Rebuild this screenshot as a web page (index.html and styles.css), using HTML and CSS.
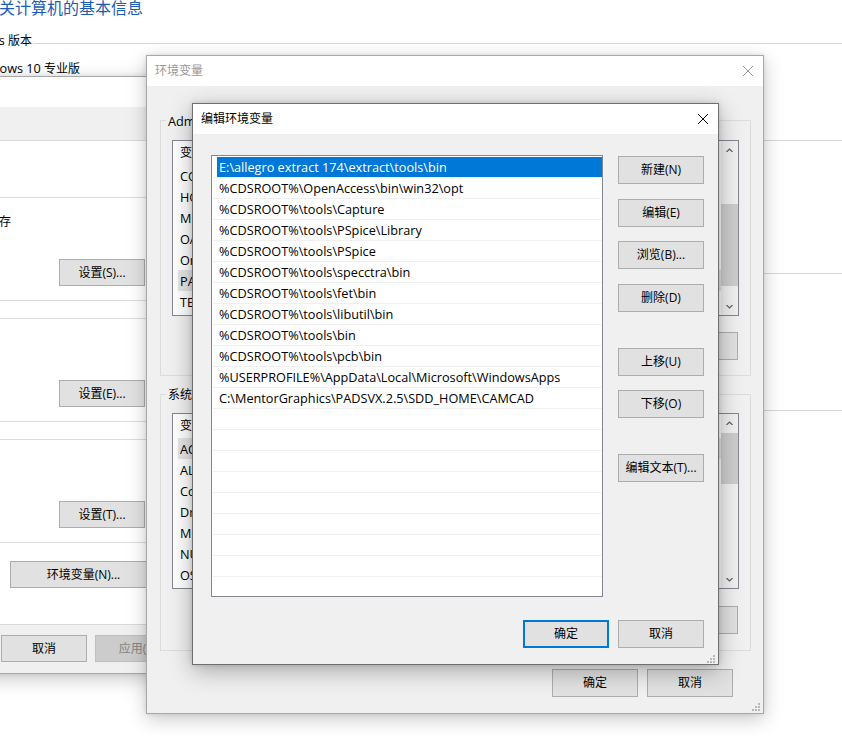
FILE: index.html
```html
<!DOCTYPE html>
<html lang="zh-CN">
<head>
<meta charset="utf-8">
<title>编辑环境变量</title>
<link rel="stylesheet" href="styles.css">
</head>
<body>
<main class="desktop">

  <section class="cp">
    <div class="cp-title-box"><h1 class="cp-title">查看有关计算机的基本信息</h1></div>
    <div class="cp-section">
      <div class="cp-section-box"><h2 class="cp-section-label"><span class="lat">Windows</span> 版本</h2></div>
      <span class="cp-rule"></span>
    </div>
    <div class="cp-edition-box"><p class="cp-edition"><span class="lat">Windows 10</span> 专业版</p></div>
    <div class="cp-sep cp-sep-1"></div>
    <div class="cp-sep cp-sep-2"></div>
    <div class="cp-sep cp-sep-3"></div>
  </section>

  <section class="win sysprops">
    <header class="titlebar"></header>
    <div class="tabstrip"></div>
    <div class="tabpage">
      <div class="sp-group sp-group-1">
        <p class="sp-desc">视觉效果，处理器计划，内存使用，以及虚拟内存</p>
        <button class="btn btn-27 sp-btn">设置(S)...</button>
      </div>
      <div class="sp-group">
        <button class="btn btn-27 sp-btn sp-btn-top">设置(E)...</button>
      </div>
      <div class="sp-group">
        <button class="btn btn-27 sp-btn sp-btn-top">设置(T)...</button>
      </div>
      <button class="btn btn-27 sp-env">环境变量(N)...</button>
    </div>
    <footer class="sp-footer">
      <button class="btn btn-27">取消</button>
      <button class="btn btn-27 btn-disabled">应用(A)</button>
    </footer>
  </section>

  <section class="win envdlg">
    <header class="titlebar">
      <span class="title title-inactive">环境变量</span>
      <svg class="close close-inactive" viewBox="0 0 10 10"><path d="M0 0L10 10M10 0L0 10" stroke="currentColor" stroke-width="1" fill="none"/></svg>
    </header>
    <div class="ev-group ev-group-user">
      <span class="legend"><span class="lat">Administrator</span> 的用户变量(U)</span>
      <div class="lv">
        <div class="lv-body">
          <div class="lv-head">变量</div>
          <div class="lv-row">CONCEPT_INST_DIR</div>
          <div class="lv-row">HOME</div>
          <div class="lv-row">MOZ_PLUGIN_PATH</div>
          <div class="lv-row">OA_HOME</div>
          <div class="lv-row">OneDrive</div>
          <div class="lv-row is-current">PATH</div>
          <div class="lv-row">TEMP</div>
        </div>
        <div class="vscroll vscroll-user">
          <span class="vs-arrow"><svg viewBox="0 0 7 4"><path d="M0.5 4L3.5 1L6.5 4" stroke="currentColor" stroke-width="1.2" fill="none"/></svg></span>
          <span class="vs-thumb"></span>
          <span class="vs-arrow vs-down"><svg viewBox="0 0 7 4"><path d="M0.5 0L3.5 3L6.5 0" stroke="currentColor" stroke-width="1.2" fill="none"/></svg></span>
        </div>
      </div>
      <div class="ev-actions">
        <button class="btn">新建(N)...</button>
        <button class="btn">编辑(E)...</button>
        <button class="btn">删除(D)</button>
      </div>
    </div>
    <div class="ev-group ev-group-sys">
      <span class="legend">系统变量(S)</span>
      <div class="lv">
        <div class="lv-body">
          <div class="lv-head">变量</div>
          <div class="lv-row is-current">ACSvcPort</div>
          <div class="lv-row">ALLUSERSPROFILE</div>
          <div class="lv-row">ComSpec</div>
          <div class="lv-row">DriverData</div>
          <div class="lv-row">MGC_HOME</div>
          <div class="lv-row">NUMBER_OF_PROCESSORS</div>
          <div class="lv-row">OS</div>
        </div>
        <div class="vscroll vscroll-sys">
          <span class="vs-arrow"><svg viewBox="0 0 7 4"><path d="M0.5 4L3.5 1L6.5 4" stroke="currentColor" stroke-width="1.2" fill="none"/></svg></span>
          <span class="vs-thumb"></span>
          <span class="vs-arrow vs-down"><svg viewBox="0 0 7 4"><path d="M0.5 0L3.5 3L6.5 0" stroke="currentColor" stroke-width="1.2" fill="none"/></svg></span>
        </div>
      </div>
      <div class="ev-actions">
        <button class="btn">新建(W)...</button>
        <button class="btn">编辑(I)...</button>
        <button class="btn">删除(L)</button>
      </div>
    </div>
    <footer class="ev-footer">
      <button class="btn">确定</button>
      <button class="btn">取消</button>
    </footer>
    <svg class="grip" viewBox="0 0 8 8"><path d="M6 0h2v2h-2zM3 3h2v2h-2zM6 3h2v2h-2zM0 6h2v2h-2zM3 6h2v2h-2zM6 6h2v2h-2z" fill="#b9b9b9"/></svg>
  </section>

  <section class="win editdlg">
    <header class="titlebar">
      <span class="title">编辑环境变量</span>
      <svg class="close" viewBox="0 0 10 10"><path d="M0 0L10 10M10 0L0 10" stroke="currentColor" stroke-width="1" fill="none"/></svg>
    </header>
    <div class="ed-body">
      <div class="pl">
        <div class="pl-row is-selected">E:\allegro extract 174\extract\tools\bin</div>
        <div class="pl-row">%CDSROOT%\OpenAccess\bin\win32\opt</div>
        <div class="pl-row">%CDSROOT%\tools\Capture</div>
        <div class="pl-row">%CDSROOT%\tools\PSpice\Library</div>
        <div class="pl-row">%CDSROOT%\tools\PSpice</div>
        <div class="pl-row">%CDSROOT%\tools\specctra\bin</div>
        <div class="pl-row">%CDSROOT%\tools\fet\bin</div>
        <div class="pl-row">%CDSROOT%\tools\libutil\bin</div>
        <div class="pl-row">%CDSROOT%\tools\bin</div>
        <div class="pl-row">%CDSROOT%\tools\pcb\bin</div>
        <div class="pl-row">%USERPROFILE%\AppData\Local\Microsoft\WindowsApps</div>
        <div class="pl-row">C:\MentorGraphics\PADSVX.2.5\SDD_HOME\CAMCAD</div>
        <div class="pl-row"></div>
        <div class="pl-row"></div>
        <div class="pl-row"></div>
        <div class="pl-row"></div>
        <div class="pl-row"></div>
        <div class="pl-row"></div>
        <div class="pl-row"></div>
        <div class="pl-row"></div>
        <div class="pl-row"></div>
      </div>
      <div class="ed-actions">
        <button class="btn">新建(N)</button>
        <button class="btn gap-15">编辑(E)</button>
        <button class="btn gap-14">浏览(B)...</button>
        <button class="btn gap-15">删除(D)</button>
        <button class="btn gap-36">上移(U)</button>
        <button class="btn gap-14">下移(O)</button>
        <button class="btn gap-36">编辑文本(T)...</button>
      </div>
    </div>
    <footer class="ed-footer">
      <button class="btn btn-default">确定</button>
      <button class="btn">取消</button>
    </footer>
    <svg class="grip" viewBox="0 0 8 8"><path d="M6 0h2v2h-2zM3 3h2v2h-2zM6 3h2v2h-2zM0 6h2v2h-2zM3 6h2v2h-2zM6 6h2v2h-2z" fill="#b9b9b9"/></svg>
  </section>

</main>
</body>
</html>
```

FILE: styles.css
```css
* { box-sizing: border-box; margin: 0; padding: 0; }
html, body { width: 842px; height: 736px; overflow: hidden; background: #fff; }
body {
  font-family: "Open Sans", "Noto Sans CJK SC", sans-serif;
  font-size: 12px;
  line-height: 16px;
  color: #000;
}
.desktop { position: relative; display: block; width: 842px; height: 736px; overflow: hidden; }
.lat { font-size: 12.7px; }

/* ---------- control panel (background) ---------- */
.cp { position: absolute; left: 0; top: 0; width: 842px; display: flex; flex-direction: column; }
.cp-title-box { display: flex; justify-content: flex-end; width: 143px; height: 16px; }
.cp-title { flex: none; font-size: 16px; line-height: 16px; font-weight: 400; color: #1c5cb4; white-space: nowrap; }
.cp-section { display: flex; height: 16px; margin-top: 16px; }
.cp-section-box { flex: none; display: flex; justify-content: flex-end; width: 32px; }
.cp-section-label { flex: none; font-size: 12px; font-weight: 400; white-space: nowrap; }
.cp-rule { flex: 1; height: 1px; align-self: flex-end; margin: 0 0 4px 1px; background: #d6d6d6; }
.cp-edition-box { display: flex; justify-content: flex-end; width: 80px; height: 16px; margin-top: 12px; }
.cp-edition { flex: none; white-space: nowrap; }
.cp-sep { height: 1px; background: #d6d6d6; }
.cp-sep-1 { margin-top: 64px; }
.cp-sep-2 { margin-top: 132px; }
.cp-sep-3 { margin-top: 136px; }

/* ---------- generic window ---------- */
.win {
  position: absolute;
  display: flex;
  flex-direction: column;
  background: #f0f0f0;
  border: 1px solid #a8a8a8;
  box-shadow: 0 5px 18px rgba(0, 0, 0, .22), 0 0 4px rgba(0, 0, 0, .10);
}
.titlebar { flex: none; height: 30px; display: flex; align-items: center; padding-left: 8px; background: #fff; }
.title { flex: 1; white-space: nowrap; }
.title-inactive { color: #999; }
.close { flex: none; width: 10px; height: 10px; margin-right: 10px; color: #000; }
.close-inactive { color: #999; }
.grip { position: absolute; width: 8px; height: 8px; right: 3px; bottom: 1px; }

.btn {
  flex: none;
  display: flex;
  align-items: center;
  justify-content: center;
  width: 86px;
  height: 28px;
  padding: 0;
  background: #e1e1e1;
  border: 1px solid #adadad;
  font: inherit;
  color: #000;
  white-space: nowrap;
}
.btn-27 { height: 27px; }
.btn-default { border: 2px solid #0078d7; }
.btn-disabled { background: #cccccc; border-color: #bfbfbf; color: #838383; }

/* ---------- system properties (left) ---------- */
.sysprops { left: -270px; top: 76px; width: 462px; height: 598px; }
.tabstrip { flex: none; height: 33px; }
.tabpage {
  flex: none;
  display: flex;
  flex-direction: column;
  height: 485px;
  margin: 0 8px;
  background: #fff;
  border: 1px solid #d9d9d9;
}
.sp-group {
  flex: none;
  display: flex;
  flex-direction: column;
  height: 104px;
  margin: 17px 24px 0 6px;
  padding-right: 12px;
  border: 1px solid #dcdcdc;
}
.sp-group-1 { margin-top: 56px; padding-top: 16px; }
.sp-desc { white-space: nowrap; }
.sp-btn { align-self: flex-end; margin-top: 29px; }
.sp-btn-top { margin-top: 61px; }
.sp-env { align-self: flex-end; width: 147px; margin: 18px 25px 0 0; }
.sp-footer { flex: 1; display: flex; justify-content: flex-end; gap: 8px; padding: 10px 10px 0 0; }

/* ---------- environment variables (middle) ---------- */
.envdlg { left: 146px; top: 55px; width: 618px; height: 659px; }
.ev-group {
  flex: none;
  display: flex;
  flex-direction: column;
  margin: 18px 12px 0 13px;
  border: 1px solid #dcdcdc;
}
.ev-group-user { margin-top: 34px; height: 256px; }
.ev-group-sys { height: 257px; }
.legend { align-self: flex-start; margin: -8px 0 0 5px; padding: 0 2px; background: #f0f0f0; white-space: nowrap; }
.lv {
  flex: none;
  display: flex;
  height: 176px;
  margin: 10px 11px 0;
  background: #fff;
  border: 1px solid #828790;
}
.lv-body { flex: 1; min-width: 0; overflow: hidden; }
.lv-head { height: 24px; display: flex; align-items: center; padding-left: 7px; }
.lv-row { height: 21px; display: flex; align-items: center; margin-left: 5px; padding-left: 2px; font-size: 12.7px; white-space: nowrap; }
.lv-row.is-current { background: #e5e5e5; }
.vscroll { flex: none; width: 17px; display: flex; flex-direction: column; background: #f0f0f0; }
.vs-arrow { flex: none; height: 17px; display: flex; align-items: center; justify-content: center; color: #606060; }
.vs-arrow svg { width: 7px; height: 4px; }
.vs-down { margin-top: auto; }
.vs-thumb { flex: none; background: #cdcdcd; }
.vscroll-user .vs-thumb { height: 82px; margin-top: 46px; }
.vscroll-sys .vs-thumb { height: 51px; margin-top: 2px; }
.ev-actions { display: flex; justify-content: flex-end; gap: 8px; margin: 16px 12px 0 0; }
.ev-group-sys .ev-actions { margin-top: 17px; }
.ev-footer { display: flex; justify-content: flex-end; gap: 9px; margin: 18px 30px 0 0; }
.envdlg .grip { right: 3px; bottom: 2px; }

/* ---------- edit environment variable (front) ---------- */
.editdlg {
  left: 192px;
  top: 103px;
  width: 527px;
  height: 562px;
  border-color: #6f6f6f;
  box-shadow: 0 6px 22px rgba(0, 0, 0, .3), 0 0 5px rgba(0, 0, 0, .15);
}
.ed-body { flex: none; display: flex; gap: 15px; margin: 21px 0 0 18px; }
.pl {
  flex: none;
  width: 392px;
  height: 442px;
  padding: 1px 0 0 1px;
  overflow: hidden;
  background: #fff;
  border: 1px solid #828790;
}
.pl-row {
  height: 21px;
  display: flex;
  align-items: center;
  padding-left: 6px;
  border-bottom: 1px solid #f0f0f0;
  font-size: 12.7px;
  white-space: nowrap;
}
.pl-row.is-selected { color: #fff; background: linear-gradient(90deg, transparent 4px, #0078d7 4px) padding-box; }
.ed-actions { flex: none; display: flex; flex-direction: column; padding-top: 1px; }
.gap-14 { margin-top: 14px; }
.gap-15 { margin-top: 15px; }
.gap-36 { margin-top: 36px; }
.ed-footer { display: flex; justify-content: flex-end; gap: 9px; margin: 23px 14px 0 0; }
```
